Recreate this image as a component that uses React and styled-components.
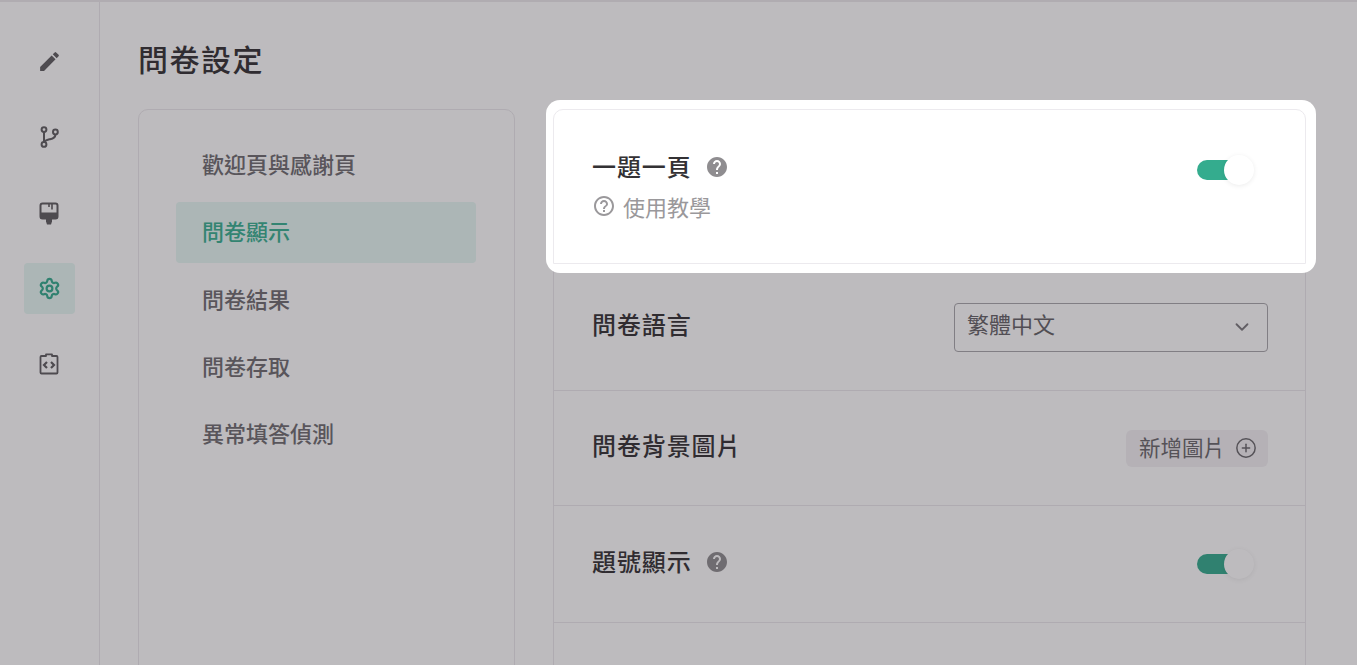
import React from 'react';
import styled, { createGlobalStyle, css } from 'styled-components';
import { MdEdit, MdHelp, MdHelpOutline } from 'react-icons/md';
import { ChevronDown, CirclePlus, Settings } from 'lucide-react';

const GlobalStyle = createGlobalStyle`
  html, body, #root {
    margin: 0;
    height: 100%;
  }
  body {
    background: #fff;
    color: #2f2e30;
    font-family: "Noto Sans CJK TC", "Noto Sans", sans-serif;
  }
`;

const Page = styled.div`
  display: flex;
  flex-direction: column;
  height: 100vh;
  overflow: hidden;
`;

const TopEdge = styled.div`
  flex: 0 0 2px;
  background: #ece9ec;
`;

const Body = styled.div`
  flex: 1;
  display: flex;
`;

const Rail = styled.nav`
  flex: 0 0 100px;
  box-sizing: border-box;
  border-right: 1px solid #ebe8ec;
  padding-top: 34px;
  display: flex;
  flex-direction: column;
  align-items: center;
  gap: 24.6px;
`;

const RailButton = styled.div`
  width: 51px;
  height: 51px;
  margin-right: 1px;
  border-radius: 4px;
  display: flex;
  align-items: center;
  justify-content: center;
  color: ${(p) => (p.$active ? '#34ac8e' : '#5f5d60')};
  background: ${(p) => (p.$active ? '#e6f8f3' : 'transparent')};
`;

const Main = styled.main`
  flex: 1;
  padding: 33px 0 0 38px;
`;

const Title = styled.h1`
  margin: 0 0 28px;
  font-size: 30px;
  line-height: 46px;
  font-weight: 500;
  letter-spacing: 1.5px;
  color: #333134;
`;

const Columns = styled.div`
  display: flex;
  align-items: flex-start;
  gap: 38px;
`;

const MenuCard = styled.div`
  width: 377px;
  height: 620px;
  box-sizing: border-box;
  border: 1px solid #ebe8ec;
  border-radius: 10px;
  padding: 25px 38px 0 37px;
  display: flex;
  flex-direction: column;
  gap: 6.3px;
`;

const MenuItem = styled.div`
  height: 61px;
  box-sizing: border-box;
  border-radius: 4px;
  padding: 0 0 5px 26px;
  display: flex;
  align-items: center;
  font-size: 22px;
  font-weight: 500;
  color: ${(p) => (p.$active ? '#38b091' : '#6e6c70')};
  background: ${(p) => (p.$active ? '#e6f8f3' : 'transparent')};
`;

const Panel = styled.div`
  width: 753px;
  box-sizing: border-box;
  border: 1px solid #ebe8ec;
  border-bottom: 0;
  border-radius: 10px 10px 0 0;
`;

const Row = styled.div`
  height: ${(p) => p.$height}px;
  box-sizing: border-box;
  padding: 0 37px 0 38px;
  border-bottom: 1px solid #ebe8ec;
  display: flex;
  align-items: center;
  justify-content: space-between;
`;

// the lit row sits above the scrim, which is the huge shadow of its ::before
const spotlight = css`
  position: relative;
  z-index: 10;

  &::before {
    content: '';
    position: absolute;
    inset: -10px -11px -10px -8px;
    z-index: -1;
    background: #fff;
    border-radius: 14px;
    box-shadow: 0 0 0 2000px rgba(42, 36, 44, 0.31);
  }

  &::after {
    content: '';
    position: absolute;
    inset: -1px -1px -1px -1px;
    border: 1px solid #eceaee;
    border-radius: 10px 10px 0 0;
    pointer-events: none;
  }
`;

const LitRow = styled(Row)`
  ${spotlight}
  align-items: flex-start;
  padding-top: 38px;
`;

const Stack = styled.div`
  display: flex;
  flex-direction: column;
  gap: 1px;
`;

const LabelLine = styled.div`
  display: flex;
  align-items: center;
  gap: 13px;
`;

const Label = styled.span`
  font-size: 24px;
  line-height: 36px;
  padding-bottom: 6px;
  font-weight: 500;
  letter-spacing: 0.9px;
  color: #333134;
`;

const HelpIcon = styled(MdHelp)`
  color: #8f8d90;
  flex: none;
  margin-bottom: 4px;
`;

const Tutorial = styled.div`
  display: flex;
  align-items: center;
  gap: 7px;
  font-size: 22px;
  line-height: 30px;
  color: #9a989b;
`;

const Toggle = styled.div`
  position: relative;
  width: 43px;
  height: 20px;
  margin-right: 28px;
  border-radius: 10px;
  background: #34ac8e;
  flex: none;
`;

const Knob = styled.span`
  position: absolute;
  left: 27px;
  top: -5px;
  width: 30px;
  height: 30px;
  border-radius: 50%;
  background: #fff;
  box-shadow: 0 1px 5px rgba(0, 0, 0, 0.08);
`;

const LitToggle = styled(Toggle)`
  margin-top: 12px;
`;

const Select = styled.div`
  width: 314px;
  height: 49px;
  box-sizing: border-box;
  border: 1px solid #a9a7ab;
  border-radius: 4px;
  padding: 0 14px 8px 12px;
  display: flex;
  align-items: center;
  justify-content: space-between;
  font-size: 22px;
  color: #646266;

  svg {
    margin-top: 8px;
  }
`;

const AddButton = styled.div`
  height: 37px;
  width: 142px;
  box-sizing: border-box;
  border-radius: 6px;
  background: #f3f1f4;
  padding: 0 11px 3px 13px;
  display: flex;
  align-items: center;
  justify-content: space-between;
  font-size: 21.5px;
  color: #69676b;

  svg {
    margin-top: 3px;
  }
`;

const BranchIcon = () => (
  <svg width="24" height="24" viewBox="0 0 24 24" fill="none" stroke="currentColor" strokeWidth="2">
    <circle cx="7" cy="4.6" r="2.4" />
    <circle cx="7" cy="19.4" r="2.4" />
    <circle cx="18.4" cy="7" r="2.4" />
    <path d="M7 7v10" />
    <path d="M18.4 9.4c0 3.4-2.6 4.2-5.4 4.8-2.6.6-5 1-5.8 3" />
  </svg>
);

const BrushIcon = () => (
  <svg width="24" height="24" viewBox="0 0 24 24">
    <rect x="3.5" y="2.5" width="17" height="15" rx="2" fill="none" stroke="currentColor" strokeWidth="2" />
    <path d="M3 11.5h18V16a2 2 0 0 1-2 2H5a2 2 0 0 1-2-2z" fill="currentColor" />
    <path d="M9 18h6v2.4l-1 3.1h-4l-1-3.1z" fill="currentColor" />
    <path d="M15 3v5.5M12 3v3" fill="none" stroke="currentColor" strokeWidth="1.6" />
  </svg>
);

const CodeClipIcon = () => (
  <svg width="24" height="24" viewBox="0 0 24 24" fill="none" stroke="currentColor" strokeWidth="1.8">
    <path d="M9 4V2.4h6V4h4.5a1 1 0 0 1 1 1v15.5a1 1 0 0 1-1 1h-15a1 1 0 0 1-1-1V5a1 1 0 0 1 1-1z" strokeLinejoin="round" />
    <path d="M10 10l-3 3 3 3M14 10l3 3-3 3" strokeWidth="2.2" />
  </svg>
);

const menuItems = ['歡迎頁與感謝頁', '問卷顯示', '問卷結果', '問卷存取', '異常填答偵測'];

const App = () => (
  <>
    <GlobalStyle />
    <Page>
      <TopEdge />
      <Body>
        <Rail>
          <RailButton><MdEdit size={25} /></RailButton>
          <RailButton><BranchIcon /></RailButton>
          <RailButton><BrushIcon /></RailButton>
          <RailButton $active><Settings size={23} strokeWidth={2.3} /></RailButton>
          <RailButton><CodeClipIcon /></RailButton>
        </Rail>
        <Main>
          <Title>問卷設定</Title>
          <Columns>
            <MenuCard>
              {menuItems.map((item) => (
                <MenuItem key={item} $active={item === '問卷顯示'}>{item}</MenuItem>
              ))}
            </MenuCard>
            <Panel>
              <LitRow $height={154}>
                <Stack>
                  <LabelLine>
                    <Label>一題一頁</Label>
                    <HelpIcon size={24} />
                  </LabelLine>
                  <Tutorial>
                    <MdHelpOutline size={24} />
                    使用教學
                  </Tutorial>
                </Stack>
                <LitToggle><Knob /></LitToggle>
              </LitRow>
              <Row $height={127}>
                <Label>問卷語言</Label>
                <Select>
                  繁體中文
                  <ChevronDown size={22} color="#7b797d" />
                </Select>
              </Row>
              <Row $height={115}>
                <Label>問卷背景圖片</Label>
                <AddButton>
                  新增圖片
                  <CirclePlus size={22} strokeWidth={1.6} />
                </AddButton>
              </Row>
              <Row $height={117}>
                <LabelLine>
                  <Label>題號顯示</Label>
                  <HelpIcon size={24} />
                </LabelLine>
                <Toggle><Knob /></Toggle>
              </Row>
              <Row $height={120} />
            </Panel>
          </Columns>
        </Main>
      </Body>
    </Page>
  </>
);

export default App;
